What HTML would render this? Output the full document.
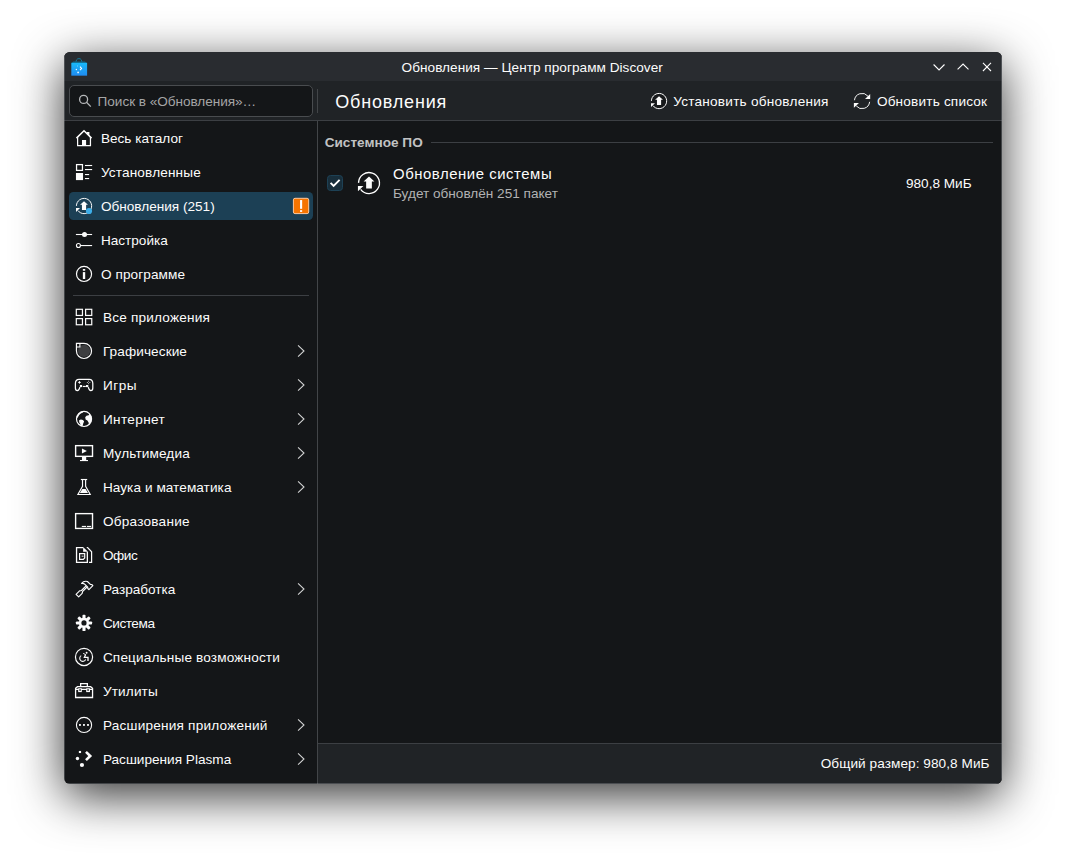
<!DOCTYPE html>
<html lang="ru">
<head>
<meta charset="utf-8">
<title>Обновления — Центр программ Discover</title>
<style>
html,body{margin:0;padding:0;}
body{width:1066px;height:860px;background:#fff;overflow:hidden;position:relative;
 font-family:"Liberation Sans","DejaVu Sans",sans-serif;font-size:13.6px;color:#fcfcfc;}
.win{position:absolute;left:64px;top:52px;width:938px;height:732px;border-radius:6px;background:#141618;
 box-shadow:0 12px 48px rgba(0,0,0,.8);}
.clip{position:absolute;left:0;top:0;width:938px;height:732px;border-radius:6px;overflow:hidden;}
.abs{position:absolute;}
.titlebar{left:0;top:0;width:938px;height:29px;background:#292c30;}
.toolbar{left:0;top:29px;width:938px;height:39px;background:#202326;}
.hline{background:#3c3f43;height:1px;}
.vline{background:#424548;width:1px;}
.search{left:5px;top:33px;width:242px;height:30px;border:1px solid #494c4f;border-radius:5px;background:#141618;}
.ph{color:#a4a5a6;}
.t{position:absolute;white-space:nowrap;}
.sel{position:absolute;left:5px;top:140px;width:244px;height:28px;border-radius:4.5px;background:#1c4055;}
svg{position:absolute;overflow:visible;}
.footer{left:254px;top:692px;width:684px;height:40px;background:#202326;}
.sub{color:#b1b2b3;}
.sect{font-weight:bold;color:#c1c2c3;}
</style>
</head>
<body>
<div class="win">
<div class="clip">
 <div class="abs titlebar"></div>
 <div class="abs toolbar"></div>
 <div class="abs hline" style="left:0;top:68px;width:938px"></div>
 <div class="abs vline" style="left:253px;top:37px;height:24px"></div>
 <div class="abs vline" style="left:253px;top:69px;height:663px"></div>
 <div class="abs search"></div>
 <div class="sel"></div>
 <div class="abs hline" style="left:9px;top:243px;width:236px"></div>
 <div class="abs hline" style="left:367px;top:90px;width:562px"></div>
 <div class="abs footer"></div>
 <div class="abs hline" style="left:254px;top:691px;width:684px"></div>
 <div class="abs" style="left:0;top:4px;width:1px;height:724px;background:rgba(150,153,157,.36)"></div>
 <div class="abs" style="left:937px;top:4px;width:1px;height:724px;background:rgba(150,153,157,.36)"></div>
 <div class="abs" style="left:4px;top:731px;width:930px;height:1px;background:rgba(150,153,157,.36)"></div>
 <span class="t" id="title" style="left:337.60px;top:8px;line-height:15px;height:15px;letter-spacing:0.034px">Обновления — Центр программ Discover</span>
 <span class="t ph" id="ph" style="left:33.60px;top:42px;line-height:15px;height:15px;letter-spacing:-0.045px">Поиск в «Обновления»…</span>
 <span class="t" id="h2" style="left:271.20px;top:40px;line-height:20px;height:20px;font-size:18px;letter-spacing:0.833px">Обновления</span>
 <span class="t" id="inst" style="left:609.20px;top:42px;line-height:15px;height:15px;letter-spacing:0.240px">Установить обновления</span>
 <span class="t" id="refr" style="left:812.90px;top:42px;line-height:15px;height:15px;letter-spacing:0.186px">Обновить список</span>
 <span class="t" id="r1_0" style="left:36.90px;top:79px;line-height:15px;height:15px">Весь каталог</span>
 <span class="t" id="r1_1" style="left:36.90px;top:113px;line-height:15px;height:15px;letter-spacing:0.158px">Установленные</span>
 <span class="t" id="r1_2" style="left:36.90px;top:147px;line-height:15px;height:15px">Обновления (251)</span>
 <span class="t" id="r1_3" style="left:36.90px;top:181px;line-height:15px;height:15px">Настройка</span>
 <span class="t" id="r1_4" style="left:36.90px;top:215px;line-height:15px;height:15px;letter-spacing:0.100px">О программе</span>
 <span class="t" id="r2_0" style="left:38.90px;top:258px;line-height:15px;height:15px;letter-spacing:0.200px">Все приложения</span>
 <span class="t" id="r2_1" style="left:38.90px;top:292px;line-height:15px;height:15px;letter-spacing:0.100px">Графические</span>
 <span class="t" id="r2_2" style="left:38.90px;top:326px;line-height:15px;height:15px;letter-spacing:0.533px">Игры</span>
 <span class="t" id="r2_3" style="left:38.90px;top:360px;line-height:15px;height:15px;letter-spacing:0.371px">Интернет</span>
 <span class="t" id="r2_4" style="left:38.90px;top:394px;line-height:15px;height:15px;letter-spacing:0.140px">Мультимедиа</span>
 <span class="t" id="r2_5" style="left:38.90px;top:428px;line-height:15px;height:15px;letter-spacing:0.065px">Наука и математика</span>
 <span class="t" id="r2_6" style="left:38.90px;top:462px;line-height:15px;height:15px;letter-spacing:0.240px">Образование</span>
 <span class="t" id="r2_7" style="left:38.90px;top:496px;line-height:15px;height:15px;letter-spacing:-0.450px">Офис</span>
 <span class="t" id="r2_8" style="left:38.90px;top:530px;line-height:15px;height:15px">Разработка</span>
 <span class="t" id="r2_9" style="left:38.90px;top:564px;line-height:15px;height:15px;letter-spacing:-0.450px">Система</span>
 <span class="t" id="r2_10" style="left:38.90px;top:598px;line-height:15px;height:15px;letter-spacing:0.154px">Специальные возможности</span>
 <span class="t" id="r2_11" style="left:38.90px;top:632px;line-height:15px;height:15px;letter-spacing:0.150px">Утилиты</span>
 <span class="t" id="r2_12" style="left:38.90px;top:666px;line-height:15px;height:15px;letter-spacing:0.215px">Расширения приложений</span>
 <span class="t" id="r2_13" style="left:38.90px;top:700px;line-height:15px;height:15px;letter-spacing:0.012px">Расширения Plasma</span>
 <span class="t sect" id="sect" style="left:260.70px;top:83px;line-height:15px;height:15px">Системное ПО</span>
 <span class="t" id="upd" style="left:329.00px;top:114px;line-height:16px;height:16px;font-size:14.9px;letter-spacing:0.553px">Обновление системы</span>
 <span class="t sub" id="sub" style="left:329.00px;top:134px;line-height:15px;height:15px">Будет обновлён 251 пакет</span>
 <span class="t" id="size" style="left:842.00px;top:124px;line-height:15px;height:15px">980,8 МиБ</span>
 <span class="t" id="total" style="left:756.70px;top:704px;line-height:15px;height:15px;letter-spacing:0.064px">Общий размер: 980,8 МиБ</span>
 <svg style="left:4px;top:3px" width="24" height="24" viewBox="68 55 24 24" fill="none" stroke="none"><defs><linearGradient id="bg" x1="0" y1="0" x2="0" y2="1"><stop offset="0" stop-color="#19b9fa"/><stop offset="1" stop-color="#1f8bf0"/></linearGradient></defs><path d="M75.9 63.2 Q75.9 58.6 78.95 58.6 Q82 58.6 82 63.2" stroke="#157a9b" stroke-width="1.0"/><path d="M73.2 61.6 H84.9 L87.1 63 H71.3 Z" fill="#126687"/><rect x="71.3" y="62.87" width="15.8" height="12.8" fill="url(#bg)"/><path d="M79.6 67 L80.4 66.3 L82.3 68.4 L80.4 70.5 L79.6 69.8 L80.9 68.4 Z" fill="#fff"/><circle cx="76.4" cy="69.5" r="0.75" fill="#fff" opacity=".9"/><circle cx="78.1" cy="72.4" r="0.9" fill="#fff" opacity=".9"/><rect x="77" y="65.6" width="0.8" height="0.8" fill="#fff" opacity=".6"/></svg>
 <svg style="left:862px;top:3px" width="72" height="24" viewBox="926 55 72 24" fill="none" stroke="none"><path d="M933.6 64.5 L939.05 69.95 L944.5 64.5" stroke="#fcfcfc" stroke-width="1.1"/><path d="M957.6 69.45 L963.05 64 L968.5 69.45" stroke="#fcfcfc" stroke-width="1.1"/><path d="M982.95 62.95 L991.0 71.0 M991.0 62.95 L982.95 71.0" stroke="#fcfcfc" stroke-width="1.1"/></svg>
 <svg style="left:10px;top:39px" width="24" height="24" viewBox="74 91 24 24" fill="none" stroke="none"><circle cx="83.6" cy="99.4" r="4.0" stroke="#b6b8ba" stroke-width="1.3"/><path d="M86.5 102.3 L90.8 106.6" stroke="#b6b8ba" stroke-width="1.3"/></svg>
 <svg style="left:583px;top:37px" width="24" height="24" viewBox="647 89 24 24" fill="none" stroke="none"><circle cx="659.03" cy="101.03" r="7.62" fill="#17191b"/><path d="M651.41 100.90 A7.62 7.62 0 1 1 652.94 105.62" stroke="#fcfcfc" stroke-width="1.0"/><path d="M650.98 103.13 H654.98 L650.98 107.03 Z" fill="#fcfcfc"/><path d="M659.03 96.18 L662.98 99.83 H661.11 V105.03 H656.95 V99.83 H655.08 Z" fill="#fcfcfc"/></svg>
 <svg style="left:786px;top:37px" width="24" height="24" viewBox="850 89 24 24" fill="none" stroke="none"><path d="M854.48 100.22 A7.62 7.62 0 0 1 867.90 96.12" stroke="#fcfcfc" stroke-width="0.95"/><path d="M869.64 101.82 A7.62 7.62 0 0 1 856.22 105.92" stroke="#fcfcfc" stroke-width="0.95"/><path d="M870.2 93.9 V99 H865 Z" fill="#fcfcfc"/><path d="M853.9 103.07 H858.96 L853.9 107.85 Z" fill="#fcfcfc"/></svg>
 <svg style="left:8px;top:74px" width="24" height="24" viewBox="72 126 24 24" fill="none" stroke="none"><path d="M76.45 138.15 L84 130.75 L91.55 138.15" stroke="#fcfcfc" stroke-width="1.5"/><path d="M77.6 137.3 V145.6 H90.45 V137.3" stroke="#fcfcfc" stroke-width="1.25"/><rect x="82" y="140" width="4.1" height="5.6" fill="#fcfcfc"/><path d="M86.7 131.9 H89.4 V136.2 L86.7 133.5 Z" fill="#fcfcfc"/></svg>
 <svg style="left:8px;top:108px" width="24" height="24" viewBox="72 160 24 24" fill="none" stroke="none"><rect x="76.55" y="164.6" width="5.9" height="5.8" stroke="#fcfcfc" stroke-width="1.25"/><rect x="75.95" y="173" width="7.1" height="7.1" fill="#fcfcfc"/><rect x="84.95" y="164.95" width="7.2" height="1.1" fill="#fcfcfc"/><rect x="84.95" y="169" width="7.2" height="1.1" fill="#fcfcfc"/><rect x="84.95" y="174" width="4.2" height="1.1" fill="#fcfcfc"/><rect x="84.95" y="178" width="4.2" height="1.1" fill="#fcfcfc"/></svg>
 <svg style="left:8px;top:142px" width="24" height="24" viewBox="72 194 24 24" fill="none" stroke="none"><path d="M76.41 205.87 A7.62 7.62 0 1 1 77.94 210.59" stroke="#fcfcfc" stroke-width="1.0"/><path d="M75.98 208.10 H79.98 L75.98 212.00 Z" fill="#fcfcfc"/><path d="M84.03 201.15 L87.98 204.80 H86.11 V210.00 H81.95 V204.80 H80.08 Z" fill="#fcfcfc"/><circle cx="89.00" cy="211.00" r="3.1" fill="#3daee9"/></svg>
 <svg style="left:8px;top:176px" width="24" height="24" viewBox="72 228 24 24" fill="none" stroke="none"><rect x="75.9" y="233.95" width="16.2" height="1.1" fill="#fcfcfc"/><circle cx="84.5" cy="234.5" r="2.5" fill="#fcfcfc"/><rect x="80.8" y="245" width="11.3" height="1.1" fill="#fcfcfc"/><circle cx="78.45" cy="245.55" r="2.0" stroke="#fcfcfc" stroke-width="1.1"/></svg>
 <svg style="left:8px;top:210px" width="24" height="24" viewBox="72 262 24 24" fill="none" stroke="none"><circle cx="84.03" cy="273.95" r="7.55" stroke="#fcfcfc" stroke-width="1.2"/><rect x="82.85" y="269" width="2.35" height="1.75" fill="#fcfcfc"/><rect x="82.85" y="272.1" width="2.35" height="6.9" fill="#fcfcfc"/></svg>
 <svg style="left:225px;top:142px" width="24" height="24" viewBox="289 194 24 24" fill="none" stroke="none"><rect x="293.4" y="198.3" width="15.3" height="15.3" rx="1.6" fill="#f67400" stroke="#fcc9a0" stroke-width="1"/><rect x="300.05" y="200.05" width="2.1" height="8.75" fill="#ffffff"/><rect x="300.05" y="210.2" width="2.1" height="1.7" fill="#ffffff"/></svg>
 <svg style="left:8px;top:253px" width="24" height="24" viewBox="72 305 24 24" fill="none" stroke="none"><rect x="76.3" y="309.3" width="6.15" height="6.15" stroke="#fcfcfc" stroke-width="1.2"/><rect x="76.3" y="318.6" width="6.15" height="6.15" stroke="#fcfcfc" stroke-width="1.2"/><rect x="85.6" y="309.3" width="6.15" height="6.15" stroke="#fcfcfc" stroke-width="1.2"/><rect x="85.6" y="318.6" width="6.15" height="6.15" stroke="#fcfcfc" stroke-width="1.2"/></svg>
 <svg style="left:8px;top:287px" width="24" height="24" viewBox="72 339 24 24" fill="none" stroke="none"><circle cx="84.1" cy="350.95" r="6.1" fill="#3d3e40"/><path d="M84.03 343.4 H76.45 V350.95 A7.55 7.55 0 1 0 84.03 343.4 Z" stroke="#fcfcfc" stroke-width="1.2"/><path d="M76.45 346.95 H79.9 V343.4" stroke="#fcfcfc" stroke-width="1.1"/></svg>
 <svg style="left:8px;top:321px" width="24" height="24" viewBox="72 373 24 24" fill="none" stroke="none"><path d="M79.9 387.1 Q79 390.7 77.4 390.7 Q75.4 390.7 75.4 388 V383.6 Q75.4 379.4 79 379.4 H89.2 Q92.8 379.4 92.8 383.6 V388 Q92.8 390.7 90.8 390.7 Q89.2 390.7 88.3 387.1" stroke="#fcfcfc" stroke-width="1.25"/><rect x="79.85" y="385" width="2.25" height="2.1" fill="#fcfcfc"/><rect x="82.8" y="385.85" width="3" height="1.2" fill="#fcfcfc"/><rect x="86" y="385" width="2.3" height="2.1" fill="#fcfcfc"/><path d="M79.45 380.8 L80.1 381.8 L81.1 382.45 L80.1 383.1 L79.45 384.1 L78.8 383.1 L77.8 382.45 L78.8 381.8 Z" fill="#fcfcfc"/><g fill="#e0e0e0"><rect x="88.15" y="380.75" width="0.9" height="0.9"/><rect x="88.15" y="383.25" width="0.9" height="0.9"/><rect x="86.9" y="382" width="0.9" height="0.9"/><rect x="89.4" y="382" width="0.9" height="0.9"/></g></svg>
 <svg style="left:8px;top:355px" width="24" height="24" viewBox="72 407 24 24" fill="none" stroke="none"><clipPath id="gc"><circle cx="84.03" cy="418.95" r="7.6"/></clipPath><g clip-path="url(#gc)" fill="#fcfcfc"><path d="M76 417 L77.2 413.9 L80.1 411.7 L82.7 411.3 L83 412.5 L80.8 413.5 L79.1 415.1 L77.9 417.3 L76.5 418.2 Z"/><path d="M85.2 417.3 L86.5 415.7 L88.7 415.2 L89.3 413.9 L91.2 414.6 L92.4 417 L92.4 421.5 L90.7 424.9 L88.9 425.5 L88.6 422.5 L87.4 420.5 L85.6 419.5 Z"/><path d="M79.1 420.3 L80.9 419.4 L83.0 420.0 L84.1 421.6 L83.3 423.2 L82.7 425.4 L81.8 426.8 L80.6 426.4 L80.3 424 L79.2 422.3 Z"/></g><circle cx="84.03" cy="418.95" r="7.55" stroke="#fcfcfc" stroke-width="1.2"/></svg>
 <svg style="left:8px;top:389px" width="24" height="24" viewBox="72 441 24 24" fill="none" stroke="none"><rect x="75.63" y="445.65" width="16.88" height="10.7" stroke="#fcfcfc" stroke-width="1.4"/><rect x="81.96" y="457" width="4.24" height="3.2" fill="#fcfcfc"/><rect x="80" y="460" width="8" height="1.1" fill="#fcfcfc"/><path d="M81.96 448.46 V453.5 L86.9 451 Z" fill="#fcfcfc"/></svg>
 <svg style="left:8px;top:423px" width="24" height="24" viewBox="72 475 24 24" fill="none" stroke="none"><rect x="80.84" y="478.94" width="6.33" height="1.15" fill="#fcfcfc"/><path d="M82.52 480 V486.3 L77.9 494.48 H90.25 L85.62 486.3 V480" stroke="#fcfcfc" stroke-width="1.15" stroke-linejoin="miter"/><path d="M82.4 489.07 H85.6 L88 493.0 H79.85 Z" fill="#fcfcfc"/></svg>
 <svg style="left:8px;top:457px" width="24" height="24" viewBox="72 509 24 24" fill="none" stroke="none"><rect x="75.62" y="513.63" width="16.9" height="14.8" stroke="#fcfcfc" stroke-width="1.38"/><rect x="81.82" y="525.89" width="4.22" height="1.1" fill="#fcfcfc"/><rect x="86.89" y="525.89" width="4.22" height="1.1" fill="#fcfcfc"/></svg>
 <svg style="left:8px;top:491px" width="24" height="24" viewBox="72 543 24 24" fill="none" stroke="none"><path d="M83.1 547.59 H76.55 V562.45 H87.35 V551.7" stroke="#fcfcfc" stroke-width="1.3"/><path d="M83.1 546.94 V551.7 H88 Z" fill="#fcfcfc"/><path d="M79.6 553.6 H84.7 V558 L83.3 559.4 H79.6 Z" stroke="#fcfcfc" stroke-width="1.2"/><rect x="81.6" y="555.7" width="2" height="0.9" fill="#fcfcfc"/><path d="M86.3 547.1 H87.9 L92.2 551.4 V563.1 H89 V561.8 H91 V551.9 L88.3 549.2 Z" fill="#fcfcfc"/></svg>
 <svg style="left:8px;top:525px" width="24" height="24" viewBox="72 577 24 24" fill="none" stroke="none"><g transform="translate(84.1 588.9) rotate(45)" stroke="#fcfcfc" stroke-width="1.15" stroke-linejoin="round"><path d="M-5.6 -2.1 Q-6.1 -5.6 -2.9 -7.6 H1.3 L2.3 -8.5 H3.9 V-2.9 H2.3 L1.3 -3.8 H-2.6 Q-4.2 -3.8 -5.6 -2.1 Z"/><path d="M-0.75 -3.8 V3 L-1.85 4.6 V9.5 H1.85 V4.6 L0.75 3 V-3.8"/></g></svg>
 <svg style="left:8px;top:559px" width="24" height="24" viewBox="72 611 24 24" fill="none" stroke="none"><g fill="#fcfcfc"><circle cx="83.99" cy="622.96" r="5.1"/><rect x="82.44" y="614.86" width="3.1" height="5" rx="0.9" transform="rotate(0 83.99 622.96)"/><rect x="82.44" y="614.86" width="3.1" height="5" rx="0.9" transform="rotate(45 83.99 622.96)"/><rect x="82.44" y="614.86" width="3.1" height="5" rx="0.9" transform="rotate(90 83.99 622.96)"/><rect x="82.44" y="614.86" width="3.1" height="5" rx="0.9" transform="rotate(135 83.99 622.96)"/><rect x="82.44" y="614.86" width="3.1" height="5" rx="0.9" transform="rotate(180 83.99 622.96)"/><rect x="82.44" y="614.86" width="3.1" height="5" rx="0.9" transform="rotate(225 83.99 622.96)"/><rect x="82.44" y="614.86" width="3.1" height="5" rx="0.9" transform="rotate(270 83.99 622.96)"/><rect x="82.44" y="614.86" width="3.1" height="5" rx="0.9" transform="rotate(315 83.99 622.96)"/></g><circle cx="83.99" cy="622.96" r="2.6" fill="#141618"/></svg>
 <svg style="left:8px;top:593px" width="24" height="24" viewBox="72 645 24 24" fill="none" stroke="none"><circle cx="84.02" cy="656.96" r="8.58" stroke="#fcfcfc" stroke-width="1.2"/><circle cx="86.6" cy="652.8" r="0.95" fill="#fcfcfc"/><path d="M85.7 654.4 L84.4 657.3 H88 V661" stroke="#fcfcfc" stroke-width="1.3" stroke-linejoin="miter"/><path d="M85.6 654.6 L83.2 653.4" stroke="#fcfcfc" stroke-width="1.0"/><path d="M81.2 655.6 A3.1 3.1 0 1 0 85.7 659.4" stroke="#fcfcfc" stroke-width="1.1"/></svg>
 <svg style="left:8px;top:627px" width="24" height="24" viewBox="72 679 24 24" fill="none" stroke="none"><path d="M80.64 686.1 V683.6 H87.36 V686.1" stroke="#fcfcfc" stroke-width="1.3"/><path d="M75.6 688.3 L77.5 686.67 H90.6 L92.55 688.3 V697.5 H75.6 Z" stroke="#fcfcfc" stroke-width="1.3" stroke-linejoin="miter"/><rect x="75.6" y="688.75" width="17" height="1.25" fill="#fcfcfc"/><rect x="78.16" y="688.3" width="3.66" height="3.8" fill="#fcfcfc"/><rect x="86.18" y="688.3" width="3.8" height="3.8" fill="#fcfcfc"/><rect x="79.3" y="689.3" width="1.55" height="1.45" fill="#141618"/><rect x="87.3" y="689.3" width="1.55" height="1.45" fill="#141618"/></svg>
 <svg style="left:8px;top:661px" width="24" height="24" viewBox="72 713 24 24" fill="none" stroke="none"><circle cx="84.03" cy="724.95" r="7.6" stroke="#fcfcfc" stroke-width="1.1"/><rect x="79" y="724.05" width="1.9" height="1.8" fill="#fcfcfc"/><rect x="83" y="724.05" width="1.9" height="1.8" fill="#fcfcfc"/><rect x="87.05" y="724.05" width="1.9" height="1.8" fill="#fcfcfc"/></svg>
 <svg style="left:8px;top:695px" width="24" height="24" viewBox="72 747 24 24" fill="none" stroke="none"><rect x="78.87" y="750.94" width="2.2" height="2.1" fill="#fcfcfc"/><circle cx="77.46" cy="758.54" r="1.7" fill="#fcfcfc"/><circle cx="81.96" cy="765" r="2.1" fill="#fcfcfc"/><path d="M85.06 752.8 L86.9 750.94 L92.1 756 L86.9 761.07 L85.06 759.24 L88.3 756 Z" fill="#fcfcfc"/></svg>
 <svg style="left:228px;top:287px" width="24" height="24" viewBox="292 339 24 24" fill="none" stroke="none"><path d="M298.05 345.30 L304 351.00 L298.05 356.70" stroke="#d4d5d5" stroke-width="1.05"/></svg>
 <svg style="left:228px;top:321px" width="24" height="24" viewBox="292 373 24 24" fill="none" stroke="none"><path d="M298.05 379.30 L304 385.00 L298.05 390.70" stroke="#d4d5d5" stroke-width="1.05"/></svg>
 <svg style="left:228px;top:355px" width="24" height="24" viewBox="292 407 24 24" fill="none" stroke="none"><path d="M298.05 413.30 L304 419.00 L298.05 424.70" stroke="#d4d5d5" stroke-width="1.05"/></svg>
 <svg style="left:228px;top:389px" width="24" height="24" viewBox="292 441 24 24" fill="none" stroke="none"><path d="M298.05 447.30 L304 453.00 L298.05 458.70" stroke="#d4d5d5" stroke-width="1.05"/></svg>
 <svg style="left:228px;top:423px" width="24" height="24" viewBox="292 475 24 24" fill="none" stroke="none"><path d="M298.05 481.30 L304 487.00 L298.05 492.70" stroke="#d4d5d5" stroke-width="1.05"/></svg>
 <svg style="left:228px;top:525px" width="24" height="24" viewBox="292 577 24 24" fill="none" stroke="none"><path d="M298.05 583.30 L304 589.00 L298.05 594.70" stroke="#d4d5d5" stroke-width="1.05"/></svg>
 <svg style="left:228px;top:661px" width="24" height="24" viewBox="292 713 24 24" fill="none" stroke="none"><path d="M298.05 719.30 L304 725.00 L298.05 730.70" stroke="#d4d5d5" stroke-width="1.05"/></svg>
 <svg style="left:228px;top:695px" width="24" height="24" viewBox="292 747 24 24" fill="none" stroke="none"><path d="M298.05 753.30 L304 759.00 L298.05 764.70" stroke="#d4d5d5" stroke-width="1.05"/></svg>
 <svg style="left:259px;top:119px" width="24" height="24" viewBox="323 171 24 24" fill="none" stroke="none"><rect x="327.5" y="175.5" width="15" height="15" rx="3" fill="#182e3b" stroke="#1d4155" stroke-width="1"/><path d="M330.6 182.8 L333.6 185.8 L339.6 179.8" stroke="#ffffff" stroke-width="1.9" stroke-linejoin="miter"/></svg>
 <svg style="left:290px;top:116px" width="30" height="30" viewBox="354 168 30 30" fill="none" stroke="none"><path d="M358.52 182.87 A10.48 10.48 0 1 1 360.63 189.36" stroke="#fcfcfc" stroke-width="1.3"/><path d="M357.93 185.94 H363.43 L357.93 191.30 Z" fill="#fcfcfc"/><path d="M369.00 176.38 L374.43 181.40 H371.86 V188.55 H366.14 V181.40 H363.57 Z" fill="#fcfcfc"/></svg>
</div>
</div>
</body>
</html>
